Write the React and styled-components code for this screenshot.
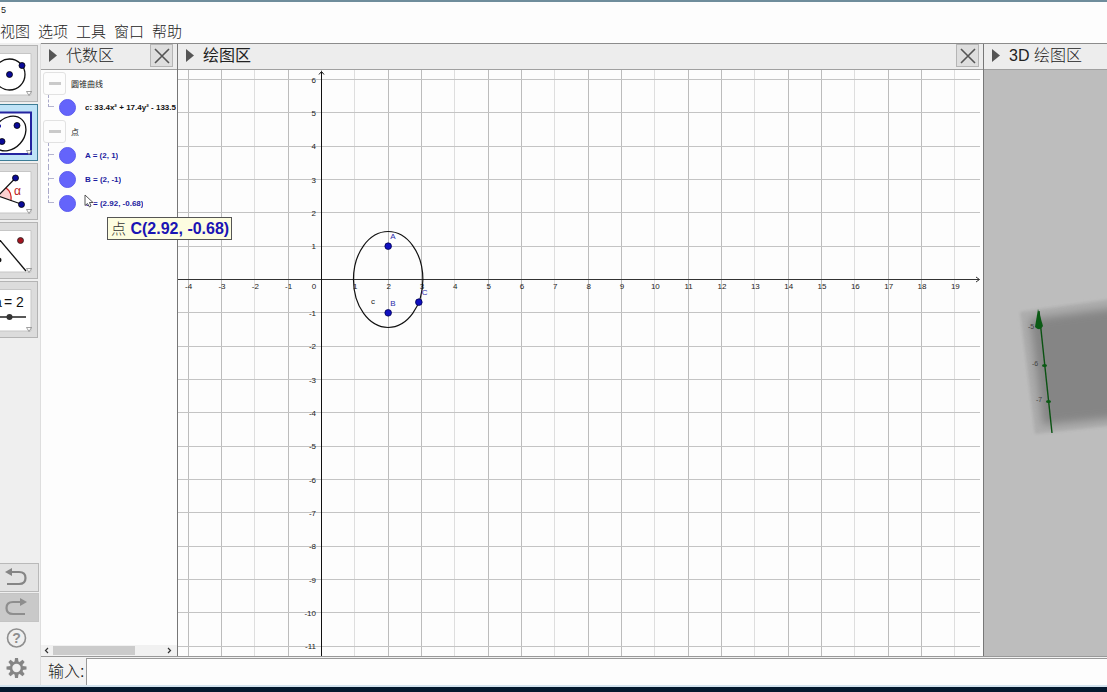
import React from 'react';
import styled, { createGlobalStyle, css } from 'styled-components';

const GlobalStyle = createGlobalStyle`
  * {
    box-sizing: border-box;
  }

  body {
    margin: 0;
    overflow: hidden;
    font-family: 'Liberation Sans', 'Noto Sans CJK SC', sans-serif;
    color: #222;
    background: #fdfdfd;
  }

  button,
  input {
    font: inherit;
    color: inherit;
  }
`;

const StyledWindow = styled.div`
  display: flex;
  flex-direction: column;
  height: 100vh;
  border-top: 2px solid #6f8d9c;
`;

const StyledTitle = styled.header`
  flex: none;
  height: 18px;
  font-size: 9px;
  line-height: 16px;
  padding-left: 1px;
`;

const StyledMenu = styled.nav`
  flex: none;
  display: flex;
  gap: 8px;
  height: 23px;
`;

const StyledMenuButton = styled.button`
  padding: 0;
  border: 0;
  background: none;
  font-size: 15px;
  font-weight: 300;
  line-height: 23px;
  white-space: nowrap;
`;

const StyledBody = styled.div`
  flex: 1;
  min-height: 0;
  display: flex;
`;

const StyledToolbar = styled.aside`
  flex: none;
  display: flex;
  flex-direction: column;
  justify-content: space-between;
  width: 41px;
  padding-top: 2px;
  background: #efefef;
  border-right: 1px solid #dedede;
`;

const StyledTools = styled.div`
  display: flex;
  flex-direction: column;
  gap: 2px;
`;

const StyledTool = styled.button`
  display: flex;
  align-items: center;
  width: 38px;
  height: 57px;
  padding: 0;
  border: 1px solid #b4b4b4;
  border-left: 0;
  background: #dcdcdc;

  ${({ $active }) =>
    $active &&
    css`
      border-color: #3d7d96;
      background: #bfe3f7;
    `}
`;

const StyledActions = styled.div`
  display: flex;
  flex-direction: column;
  gap: 1px;
  padding-bottom: 3px;
`;

const StyledAction = styled.button`
  display: flex;
  align-items: center;
  width: 39px;
  height: 29px;
  padding: 0 0 0 5px;
  border: 1px solid transparent;
  border-left: 0;
  background: none;

  ${({ $look }) =>
    $look === 'raised' &&
    css`
      background: #e3e3e3;
      border-color: #b9b9b9;
    `}
  ${({ $look }) =>
    $look === 'pressed' &&
    css`
      background: #c9c9c9;
      border-color: #c4c4c4;
    `}
`;

const StyledMain = styled.main`
  flex: 1;
  min-width: 0;
  display: flex;
  flex-direction: column;
`;

const StyledPanels = styled.div`
  flex: 1;
  min-height: 0;
  display: grid;
  grid-template-columns: 137px minmax(0, 1fr) 123px;
  border-top: 1px solid #8c8c8c;
  border-bottom: 1px solid #999;
`;

const StyledPanel = styled.section`
  display: flex;
  flex-direction: column;
  min-width: 0;
  min-height: 0;
  border-right: ${({ $last }) => ($last ? 0 : '1px solid #777')};
  background: ${({ $dark }) => ($dark ? '#bdbdbd' : '#fdfdfd')};
`;

const StyledPanelHeader = styled.header`
  flex: none;
  display: flex;
  align-items: center;
  height: 26px;
  padding: 0 4px 2px 8px;
  border-bottom: 1px solid #a0a0a0;
  background: #ededed;
`;

const StyledPanelTitle = styled.h2`
  flex: 1;
  margin: 0 0 0 9px;
  font-size: 16px;
  line-height: 23px;
  font-weight: ${({ $strong }) => ($strong ? 400 : 300)};
  white-space: nowrap;
`;

const StyledClose = styled.button`
  display: flex;
  align-items: center;
  justify-content: center;
  width: 23px;
  height: 23px;
  padding: 0;
  border: 1px solid #b5b5b5;
  background: #dedede;
`;

const StyledTree = styled.div`
  flex: 1;
  padding-top: 1px;
`;

const StyledGroup = styled.div`
  display: flex;
  align-items: center;
  height: 24px;
  padding-left: 2px;
  gap: 5px;
  font-size: 8px;
`;

const StyledFold = styled.button`
  display: flex;
  align-items: center;
  justify-content: center;
  width: 23px;
  height: 23px;
  padding: 0;
  border: 1px solid #e2e2e2;
  border-radius: 3px;
  background: #fdfdfd;

  &::after {
    content: '';
    width: 12px;
    height: 3px;
    background: #cacaca;
  }
`;

const StyledItem = styled.div`
  position: relative;
  display: flex;
  align-items: center;
  height: 24px;
  padding-left: 7px;
  font-size: 8px;
  font-weight: 700;
  white-space: nowrap;
  color: ${({ $color }) => $color};
`;

const StyledBranch = styled.span`
  align-self: flex-start;
  flex: none;
  width: 6px;
  height: ${({ $end }) => ($end ? '12px' : '24px')};
  margin-right: 5px;
  border-left: 1px dashed #a9a9c9;
  background: linear-gradient(#b5b5d0, #b5b5d0) 0 11px / 6px 1px no-repeat;
`;

const StyledMarble = styled.button`
  flex: none;
  width: 17px;
  height: 17px;
  margin-right: 9px;
  padding: 0;
  border: 1px solid #5c5cee;
  border-radius: 50%;
  background: #6464fb;
`;

const StyledItemText = styled.span`
  overflow: hidden;
`;

const StyledCursor = styled.svg`
  position: absolute;
  left: 43px;
  top: 3px;
`;

const StyledTooltip = styled.div`
  position: absolute;
  z-index: 1;
  left: 66px;
  top: 26px;
  height: 23px;
  padding: 0 2px 0 3px;
  border: 1px solid #555;
  background: #fdfde0;
  color: #1a14b4;
  font-size: 16px;
  line-height: 22px;

  span {
    font-weight: 300;
    font-size: 15px;
    color: #333;
  }
`;

const StyledScroll = styled.div`
  flex: none;
  display: flex;
  align-items: center;
  justify-content: space-between;
  height: 11px;
  padding: 0 4px 0 2px;
  background: #f1f1f1;
`;

const StyledScrollTrack = styled.div`
  flex: 1;
  height: 9px;
  margin: 0 2px;
`;

const StyledScrollThumb = styled.div`
  width: 82px;
  height: 9px;
  background: #cbcbcb;
`;

const StyledCanvas = styled.svg`
  flex: 1;
  display: block;
  width: 100%;
  min-height: 0;
`;

const StyledInputBar = styled.form`
  flex: none;
  display: flex;
  align-items: stretch;
  height: 28px;
  padding-top: 1px;
  background: #f2f2f2;
`;

const StyledInputLabel = styled.label`
  width: 45px;
  padding-left: 7px;
  font-size: 16px;
  font-weight: 300;
  line-height: 28px;
  white-space: nowrap;
`;

const StyledInput = styled.input`
  flex: 1;
  min-width: 0;
  border: 1px solid #999;
  border-width: 1px 0 0 1px;
  background: #fdfdfd;
  outline: 0;
`;

const StyledTaskbar = styled.footer`
  flex: none;
  height: 7px;
  border-top: 2px solid #d3e3ee;
  background: #04192e;
`;

const DropMark = () => <path d="M26.5 40.5h5l-2.5 4z" fill="#fff" stroke="#777" strokeWidth=".7" />;

const ToolFrame = ({ children, active }) => (
  <svg width="34" height="46" viewBox="0 0 34 46" aria-hidden="true">
    <path
      d="M0 2.5H31V44H0"
      fill="#fff"
      stroke={active ? '#2424a0' : '#c6c6c6'}
      strokeWidth={active ? 2 : 1}
    />
    {children}
    <DropMark />
  </svg>
);

const tools = [
  {
    name: '圆',
    icon: (
      <>
        <circle cx="9.5" cy="23.5" r="15.5" fill="none" stroke="#111" strokeWidth="1.3" />
        <circle cx="9.5" cy="23.5" r="3" fill="#0a0a99" stroke="#000" strokeWidth=".8" />
        <circle cx="22" cy="14.5" r="3" fill="#0a0a99" stroke="#000" strokeWidth=".8" />
      </>
    ),
  },
  {
    name: '椭圆',
    active: true,
    icon: (
      <>
        <ellipse
          cx="9"
          cy="23.5"
          rx="19"
          ry="15"
          transform="rotate(-48 9 23.5)"
          fill="none"
          stroke="#111"
          strokeWidth="1.3"
        />
        <circle cx="17" cy="15.5" r="3" fill="#0a0a99" stroke="#000" strokeWidth=".8" />
        <circle cx="2" cy="31.5" r="3" fill="#0a0a99" stroke="#000" strokeWidth=".8" />
        <circle cx="-1" cy="16" r="2" fill="#0a0a99" />
      </>
    ),
  },
  {
    name: '角',
    icon: (
      <>
        <path d="M-2 27L7 18Q12 22 11 31z" fill="#fbd0d0" />
        <path d="M6 19Q12 23 11 32" fill="none" stroke="#c22" strokeWidth="1.2" />
        <path d="M15.5 9L-2 27L21 35" fill="none" stroke="#111" strokeWidth="1.2" />
        <circle cx="15.5" cy="9" r="3" fill="#0a0a99" stroke="#000" strokeWidth=".8" />
        <circle cx="21.5" cy="35.5" r="3" fill="#0a0a99" stroke="#000" strokeWidth=".8" />
        <text x="14" y="26" fontSize="12" fill="#b22">
          α
        </text>
      </>
    ),
  },
  {
    name: '对称',
    icon: (
      <>
        <path d="M-1 11L26 43" stroke="#111" strokeWidth="1.3" />
        <circle cx="20.5" cy="12.5" r="3" fill="#a51420" stroke="#222" strokeWidth=".8" />
        <circle cx="-1" cy="32" r="2.5" fill="#111" />
      </>
    ),
  },
  {
    name: '滑动条',
    icon: (
      <>
        <text x="-6" y="20" fontSize="14" fill="#111">
          a
        </text>
        <text x="4" y="20" fontSize="14" fill="#111">
          =
        </text>
        <text x="16" y="20" fontSize="14" fill="#111">
          2
        </text>
        <path d="M0 30H26" stroke="#111" strokeWidth="1.4" />
        <circle cx="9.5" cy="30" r="3" fill="#333" />
      </>
    ),
  },
];

const gearTeeth = [0, 45, 90, 135, 180, 225, 270, 315];

const actions = [
  {
    name: '撤销',
    look: 'raised',
    icon: (
      <>
        <path d="M5 5H14Q20.5 5 20.5 11T14 17H2" fill="none" stroke="#858585" strokeWidth="2.2" />
        <path d="M0 5L7 1V9z" fill="#858585" />
      </>
    ),
  },
  {
    name: '重做',
    look: 'pressed',
    icon: (
      <>
        <path d="M16 5H8Q1.5 5 1.5 11T8 17H20" fill="none" stroke="#8e8e8e" strokeWidth="2.2" />
        <path d="M22 5L15 1V9z" fill="#8e8e8e" />
      </>
    ),
  },
  {
    name: '帮助',
    icon: (
      <>
        <circle cx="11.5" cy="11" r="9" fill="none" stroke="#8e8e8e" strokeWidth="1.6" />
        <text x="11.5" y="16" fontSize="14" fontWeight="700" fill="#8e8e8e" textAnchor="middle">
          ?
        </text>
      </>
    ),
  },
  {
    name: '设置',
    icon: (
      <>
        <circle cx="11.5" cy="11" r="5.5" fill="none" stroke="#858585" strokeWidth="2.6" />
        {gearTeeth.map((angle) => (
          <path
            key={angle}
            d="M9.5 5L10 1H13L13.5 5z"
            fill="#858585"
            transform={`rotate(${angle} 11.5 11)`}
          />
        ))}
      </>
    ),
  },
];

const PanelHeader = ({ title, strong, closable }) => (
  <StyledPanelHeader>
    <svg width="8" height="14" viewBox="0 0 8 14" aria-hidden="true">
      <path d="M0 0L8 6.5L0 13z" fill="#555" />
    </svg>
    <StyledPanelTitle $strong={strong}>{title}</StyledPanelTitle>
    {closable && (
      <StyledClose type="button" aria-label="关闭">
        <svg width="16" height="16" viewBox="0 0 16 16" aria-hidden="true">
          <path d="M1 1L15 15M15 1L1 15" stroke="#555" strokeWidth="1.6" />
        </svg>
      </StyledClose>
    )}
  </StyledPanelHeader>
);

const AlgebraItem = ({ text, color = '#1c1ca0', last, children }) => (
  <StyledItem $color={color}>
    <StyledBranch $end={last} />
    <StyledMarble type="button" aria-label={text} />
    <StyledItemText>{text}</StyledItemText>
    {children}
  </StyledItem>
);

const AlgebraView = () => (
  <StyledPanel>
    <PanelHeader title="代数区" closable />
    <StyledTree>
      <StyledGroup>
        <StyledFold type="button" aria-label="圆锥曲线" />
        圆锥曲线
      </StyledGroup>
      <AlgebraItem text="c: 33.4x² + 17.4y² - 133.5" color="#111" last />
      <StyledGroup>
        <StyledFold type="button" aria-label="点" />点
      </StyledGroup>
      <AlgebraItem text="A = (2, 1)" />
      <AlgebraItem text="B = (2, -1)" />
      <AlgebraItem text="C = (2.92, -0.68)" last>
        <StyledCursor width="10" height="14" viewBox="0 0 10 14" aria-hidden="true">
          <path
            d="M1 1V11.5L3.5 9.5L5.5 13L7 12L5.5 8.5H9z"
            fill="#fff"
            stroke="#444"
            strokeWidth=".9"
          />
        </StyledCursor>
        <StyledTooltip role="tooltip">
          <span>点</span> C(2.92, -0.68)
        </StyledTooltip>
      </AlgebraItem>
    </StyledTree>
    <StyledScroll>
      <svg width="8" height="9" viewBox="0 0 8 9" aria-hidden="true">
        <path d="M5 2L2.5 4.5L5 7" fill="none" stroke="#333" strokeWidth="1.2" />
      </svg>
      <StyledScrollTrack>
        <StyledScrollThumb />
      </StyledScrollTrack>
      <svg width="8" height="9" viewBox="0 0 8 9" aria-hidden="true">
        <path d="M3 2L5.5 4.5L3 7" fill="none" stroke="#333" strokeWidth="1.2" />
      </svg>
    </StyledScroll>
  </StyledPanel>
);

// graph coordinates: one unit is 100/3 px, origin at (143.5, 209.5)
const UNIT = 100 / 3;
const px = (x) => 143.5 + x * UNIT;
const py = (y) => 209.5 - y * UNIT;
const range = (from, to) => Array.from({ length: to - from + 1 }, (_, i) => from + i);
const xTicks = range(-4, 19);
const yTicks = range(-11, 6);

const points = [
  { name: 'A', x: 2, y: 1, dx: 2, dy: -7 },
  { name: 'B', x: 2, y: -1, dx: 2, dy: -7 },
  { name: 'C', x: 2.92, y: -0.68, dx: 3, dy: -7 },
];

const GraphicsView = () => (
  <StyledPanel>
    <PanelHeader title="绘图区" strong closable />
    <StyledCanvas fontSize="8" fill="#222">
      {xTicks.map((x) => (
        <line
          key={x}
          x1={Math.floor(px(x)) + 0.5}
          x2={Math.floor(px(x)) + 0.5}
          y1="0"
          y2="100%"
          stroke={(x + 6) % 3 === 1 ? '#dedede' : '#bcbcbc'}
        />
      ))}
      {yTicks.map((y) => (
        <line
          key={y}
          x1="0"
          x2="802"
          y1={Math.floor(py(y)) + 0.5}
          y2={Math.floor(py(y)) + 0.5}
          stroke="#c4c4c4"
        />
      ))}
      <path d="M0 209.5H801M798 207L801.5 209.5L798 212" fill="none" stroke="#333" />
      <line x1="143.5" x2="143.5" y1="2" y2="100%" stroke="#111" />
      <path d="M141 4.5L143.5 1.5L146 4.5" fill="none" stroke="#111" />
      {xTicks.map((x) => (
        <text key={x} x={x === 0 ? 136 : px(x) + 0.5} y="219" textAnchor="middle">
          {x}
        </text>
      ))}
      {yTicks
        .filter((y) => y !== 0)
        .map((y) => (
          <text key={y} x="138" y={py(y) + 3} textAnchor="end">
            {y}
          </text>
        ))}
      <ellipse cx={px(2)} cy={py(0)} rx="34.7" ry="48" fill="none" stroke="#111" strokeWidth="1.2" />
      <text x="193" y="234">
        c
      </text>
      {points.map(({ name, x, y, dx, dy }) => (
        <g key={name}>
          <circle cx={px(x)} cy={py(y)} r="3.3" fill="#1010c0" stroke="#000050" strokeWidth=".8" />
          <text x={px(x) + dx} y={py(y) + dy} fill="#2a2aaa">
            {name}
          </text>
        </g>
      ))}
    </StyledCanvas>
  </StyledPanel>
);

const SpaceView = () => (
  <StyledPanel $dark $last>
    <PanelHeader title="3D 绘图区" />
    <StyledCanvas fontSize="7" fill="#444">
      <defs>
        <filter id="edge" x="-20%" y="-20%" width="140%" height="140%">
          <feGaussianBlur stdDeviation="1.5" />
        </filter>
        <filter id="haze" x="-20%" y="-20%" width="140%" height="140%">
          <feGaussianBlur stdDeviation="4" />
        </filter>
      </defs>
      <path d="M36 242L170 223V351L51 364z" fill="#adadad" filter="url(#edge)" />
      <path d="M46 249L170 233V344L59 355z" fill="#858585" filter="url(#haze)" />
      <path d="M55 241L68 363" stroke="#0a5212" strokeWidth="1.4" />
      <path d="M54 239L59 256Q56 262 51 257z" fill="#0a5a14" />
      <ellipse cx="60.5" cy="295.5" rx="2.5" ry="1.5" fill="#0a5a14" />
      <ellipse cx="64.5" cy="331.5" rx="2.5" ry="1.5" fill="#0a5a14" />
      <text x="44" y="259">
        -5
      </text>
      <text x="48" y="296">
        -6
      </text>
      <text x="52" y="332">
        -7
      </text>
    </StyledCanvas>
  </StyledPanel>
);

const App = () => (
  <>
    <GlobalStyle />
    <StyledWindow>
      <StyledTitle>5</StyledTitle>
      <StyledMenu>
        {['视图', '选项', '工具', '窗口', '帮助'].map((label) => (
          <StyledMenuButton key={label} type="button">
            {label}
          </StyledMenuButton>
        ))}
      </StyledMenu>
      <StyledBody>
        <StyledToolbar>
          <StyledTools>
            {tools.map(({ name, active, icon }) => (
              <StyledTool key={name} type="button" aria-label={name} $active={active}>
                <ToolFrame active={active}>{icon}</ToolFrame>
              </StyledTool>
            ))}
          </StyledTools>
          <StyledActions>
            {actions.map(({ name, look, icon }) => (
              <StyledAction key={name} type="button" aria-label={name} $look={look}>
                <svg width="23" height="22" viewBox="0 0 23 22" aria-hidden="true">
                  {icon}
                </svg>
              </StyledAction>
            ))}
          </StyledActions>
        </StyledToolbar>
        <StyledMain>
          <StyledPanels>
            <AlgebraView />
            <GraphicsView />
            <SpaceView />
          </StyledPanels>
          <StyledInputBar>
            <StyledInputLabel htmlFor="command">输入:</StyledInputLabel>
            <StyledInput id="command" type="text" />
          </StyledInputBar>
        </StyledMain>
      </StyledBody>
      <StyledTaskbar />
    </StyledWindow>
  </>
);

export default App;
